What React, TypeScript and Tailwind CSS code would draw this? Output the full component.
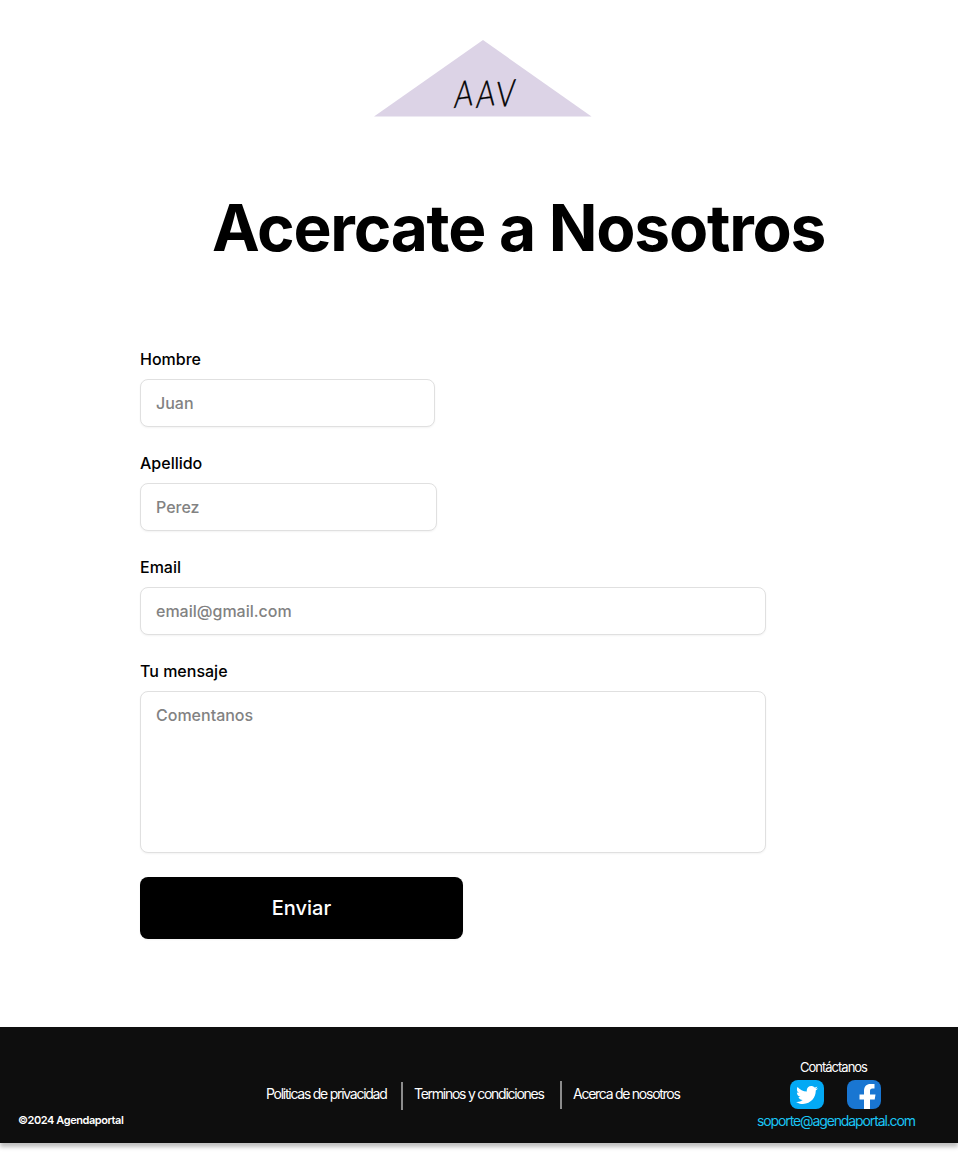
import React from "react";
import { FaTwitter } from "react-icons/fa";

const field =
  "block rounded-lg border border-[#e0e0e0] bg-white px-[15px] text-base font-medium leading-6 text-black shadow-[0_1px_2px_rgba(0,0,0,0.05)] outline-none placeholder:text-[#828282] placeholder:opacity-100";

function Field({ label, children }: { label: string; children: React.ReactNode }) {
  return (
    <label className="flex flex-col items-start gap-2 text-base font-medium leading-6">
      <span>{label}</span>
      {children}
    </label>
  );
}

function Logo() {
  return (
    <svg className="ml-[374px] mt-10 block h-[77px] w-[218px] overflow-visible" viewBox="0 0 218 77">
      <path d="M109 0L217.500 76.500H0Z" fill="#dcd3e6" />
      <g
        className="font-['Lato',sans-serif] text-[36px] font-light"
        stroke="#000"
        strokeWidth="0.4"
      >
        <text transform="translate(79.500 68) skewY(-9) skewX(-4) scale(0.800 1)">A</text>
        <text transform="translate(101.500 68) skewY(-9) skewX(-4) scale(0.800 1)">A</text>
        <text transform="translate(121.500 68) skewY(-9) skewX(-4) scale(0.800 1)">V</text>
      </g>
    </svg>
  );
}

export default function App() {
  return (
    <div className="flex h-[1173px] w-[958px] flex-col overflow-hidden bg-white font-['Inter',sans-serif] text-black">
      <header className="shrink-0">
        <Logo />
        <h1 className="ml-[212px] mt-[72px] whitespace-nowrap text-[64px] font-bold leading-[78px] tracking-[-1.24px]">
          Acercate a Nosotros
        </h1>
      </header>

      <form className="ml-[140px] mt-20 flex flex-col items-start gap-6">
        <Field label="Hombre">
          <input className={`${field} h-12 w-[295px]`} placeholder="Juan" />
        </Field>
        <Field label="Apellido">
          <input className={`${field} h-12 w-[297px]`} placeholder="Perez" />
        </Field>
        <Field label="Email">
          <input className={`${field} h-12 w-[626px]`} placeholder="email@gmail.com" />
        </Field>
        <Field label="Tu mensaje">
          <textarea className={`${field} h-[162px] w-[626px] resize-none py-[11px]`} placeholder="Comentanos" />
        </Field>
        <button
          type="button"
          className="h-[62px] w-[323px] rounded-lg bg-black text-xl font-medium text-white shadow-[0_1px_2px_rgba(0,0,0,0.05)]"
        >
          Enviar
        </button>
      </form>

      <footer className="mt-[88px] flex h-[116px] shrink-0 whitespace-nowrap bg-[#0e0e0e] text-white shadow-[0_4px_4px_rgba(0,0,0,0.25)]">
        <p className="w-[266px] pl-[18px] pt-[85px] text-[11px] font-semibold leading-4 tracking-[-0.44px]">
          ©2024 Agendaportal
        </p>
        <nav className="flex h-[30px] w-[476px] items-start pt-[54px] text-sm leading-[26px] tracking-[-1.26px]">
          <a className="w-[135px] shrink-0">Politicas de privacidad</a>
          <span className="mt-px h-7 w-[2px] shrink-0 bg-[#8c8c8c]" />
          <a className="ml-[11px] w-[146px] shrink-0">Terminos y condiciones</a>
          <span className="h-7 w-[2px] shrink-0 bg-[#8c8c8c]" />
          <a className="ml-[11px] shrink-0">Acerca de nosotros</a>
        </nav>
        <div className="flex w-[188px] flex-col items-center pt-[31px]">
          <span className="-ml-[5px] text-[13px] leading-[18px] tracking-[-1px]">Contáctanos</span>
          <div className="-ml-[2px] mt-1 flex gap-[23px]">
            <span className="flex h-[29px] w-[34px] items-center justify-center rounded-lg bg-[#03a9f4]">
              <FaTwitter className="size-[22px]" />
            </span>
            <span className="flex h-[29px] w-[34px] items-end justify-end overflow-hidden rounded-lg bg-[#1976d2]">
              <svg viewBox="0 0 34 29" className="h-[29px] w-[34px]" fill="#fff">
                <path d="M17 29V19.500H12.500V14.500H17V11C17 6.500 19.500 4 23.500 4H27.500V8.500H25.500C23.500 8.500 23 9.500 23 11V14.500H28.500L27.700 19.500H23V29Z" />
              </svg>
            </span>
          </div>
          <a className="mt-[3px] text-sm leading-[18px] tracking-[-1.12px] text-[#1ac5f4]">
            soporte@agendaportal.com
          </a>
        </div>
      </footer>
    </div>
  );
}
